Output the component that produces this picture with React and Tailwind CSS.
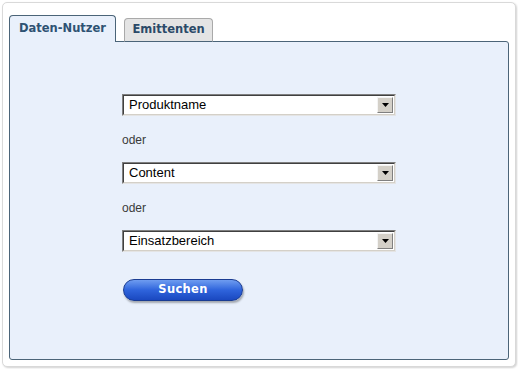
const FakeSelect = ({ label }) => (
  <div className="w-[274px] h-[22px] flex border border-t-[#7f7f7f] border-l-[#7f7f7f] border-b-[#e4e4e4] border-r-[#e4e4e4]">
    <div className="flex-1 flex border border-t-[#404040] border-l-[#404040] border-b-[#d4d0c8] border-r-[#d4d0c8] bg-white">
      <div className="flex-1 flex items-center pl-[5px] text-[13px] text-black font-['Liberation_Sans',Arial,sans-serif]">
        {label}
      </div>
      <div className="w-[16px] m-px flex items-center justify-center bg-[#d4d0c8] border border-t-[#f4f4f4] border-l-[#f4f4f4] border-b-[#808080] border-r-[#808080]">
        <svg width="7" height="4" viewBox="0 0 7 4">
          <path d="M0 0h7L3.5 4z" fill="#000" />
        </svg>
      </div>
    </div>
  </div>
);

const Oder = () => (
  <div className="h-[14px] leading-[14px] text-[12px] text-[#3a3a3a] font-['Liberation_Sans',Arial,sans-serif]">oder</div>
);

export default function App() {
  return (
    <div className="w-[518px] h-[369px] bg-white p-[2px] font-['DejaVu_Sans',Verdana,sans-serif]">
      <div className="h-full flex flex-col rounded-[5px] border border-[#d9d9d9] shadow-[1px_1px_2px_rgba(0,0,0,0.18)] bg-white pl-[6px] pr-[6px] pt-[12px] pb-[6px]">
        {/* Tabs */}
        <div className="flex items-end gap-[8px] -mb-px relative z-10">
          <div className="w-[107px] h-[27px] flex items-center justify-center rounded-t-[4px] border border-b-0 border-[#4b6478] bg-[#e9f0fb] text-[11.5px] font-bold text-[#2e5273]">
            Daten-Nutzer
          </div>
          <div className="w-[89px] h-[24px] flex items-center justify-center rounded-t-[4px] border border-[#a9a9a9] border-b-[#4b6478] bg-[#e4e4e4] text-[11.5px] font-bold text-[#2b4a68]">
            Emittenten
          </div>
        </div>

        {/* Panel */}
        <div className="flex-1 rounded-[3px] rounded-tl-none border border-[#4b6478] bg-[#e9f0fb] pl-[112px] pt-[52px]">
          <FakeSelect label="Produktname" />
          <div className="mt-[17px]"><Oder /></div>
          <div className="mt-[15px]"><FakeSelect label="Content" /></div>
          <div className="mt-[17px]"><Oder /></div>
          <div className="mt-[15px]"><FakeSelect label="Einsatzbereich" /></div>
          <button className="mt-[27px] ml-px w-[120px] h-[22px] rounded-full border border-[#1a3c92] bg-gradient-to-b from-[#6f9cf0] via-[#2f64dc] to-[#1a48c0] shadow-[1px_2px_2px_rgba(0,0,0,0.3)] text-white text-[11.5px] font-bold tracking-[0.3px]">
            Suchen
          </button>
        </div>
      </div>
    </div>
  );
}
